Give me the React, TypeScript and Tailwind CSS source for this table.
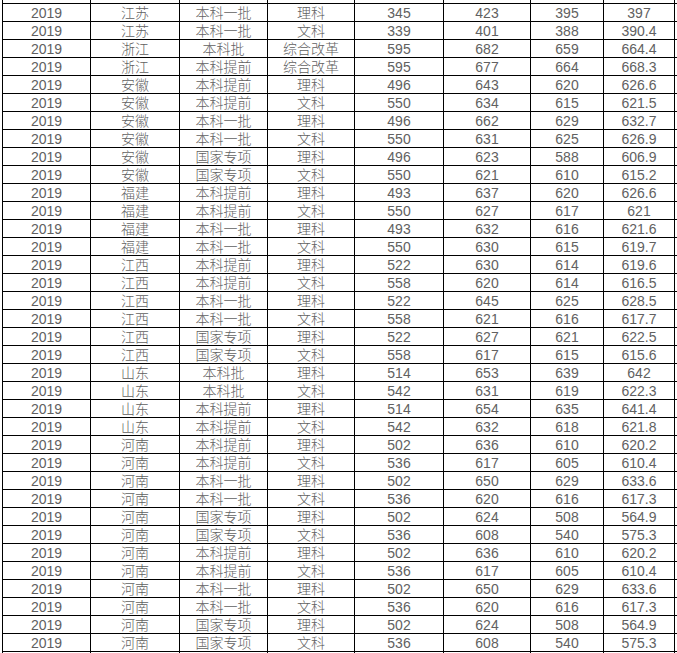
import React from 'react';

type Row = [string, string, string, string, string, string, string, string];

const rows: Row[] = [
    ['2019', '江苏', '本科一批', '理科', '345', '423', '395', '397'],
    ['2019', '江苏', '本科一批', '文科', '339', '401', '388', '390.4'],
    ['2019', '浙江', '本科批', '综合改革', '595', '682', '659', '664.4'],
    ['2019', '浙江', '本科提前', '综合改革', '595', '677', '664', '668.3'],
    ['2019', '安徽', '本科提前', '理科', '496', '643', '620', '626.6'],
    ['2019', '安徽', '本科提前', '文科', '550', '634', '615', '621.5'],
    ['2019', '安徽', '本科一批', '理科', '496', '662', '629', '632.7'],
    ['2019', '安徽', '本科一批', '文科', '550', '631', '625', '626.9'],
    ['2019', '安徽', '国家专项', '理科', '496', '623', '588', '606.9'],
    ['2019', '安徽', '国家专项', '文科', '550', '621', '610', '615.2'],
    ['2019', '福建', '本科提前', '理科', '493', '637', '620', '626.6'],
    ['2019', '福建', '本科提前', '文科', '550', '627', '617', '621'],
    ['2019', '福建', '本科一批', '理科', '493', '632', '616', '621.6'],
    ['2019', '福建', '本科一批', '文科', '550', '630', '615', '619.7'],
    ['2019', '江西', '本科提前', '理科', '522', '630', '614', '619.6'],
    ['2019', '江西', '本科提前', '文科', '558', '620', '614', '616.5'],
    ['2019', '江西', '本科一批', '理科', '522', '645', '625', '628.5'],
    ['2019', '江西', '本科一批', '文科', '558', '621', '616', '617.7'],
    ['2019', '江西', '国家专项', '理科', '522', '627', '621', '622.5'],
    ['2019', '江西', '国家专项', '文科', '558', '617', '615', '615.6'],
    ['2019', '山东', '本科批', '理科', '514', '653', '639', '642'],
    ['2019', '山东', '本科批', '文科', '542', '631', '619', '622.3'],
    ['2019', '山东', '本科提前', '理科', '514', '654', '635', '641.4'],
    ['2019', '山东', '本科提前', '文科', '542', '632', '618', '621.8'],
    ['2019', '河南', '本科提前', '理科', '502', '636', '610', '620.2'],
    ['2019', '河南', '本科提前', '文科', '536', '617', '605', '610.4'],
    ['2019', '河南', '本科一批', '理科', '502', '650', '629', '633.6'],
    ['2019', '河南', '本科一批', '文科', '536', '620', '616', '617.3'],
    ['2019', '河南', '国家专项', '理科', '502', '624', '508', '564.9'],
    ['2019', '河南', '国家专项', '文科', '536', '608', '540', '575.3'],
    ['2019', '河南', '本科提前', '理科', '502', '636', '610', '620.2'],
    ['2019', '河南', '本科提前', '文科', '536', '617', '605', '610.4'],
    ['2019', '河南', '本科一批', '理科', '502', '650', '629', '633.6'],
    ['2019', '河南', '本科一批', '文科', '536', '620', '616', '617.3'],
    ['2019', '河南', '国家专项', '理科', '502', '624', '508', '564.9'],
    ['2019', '河南', '国家专项', '文科', '536', '608', '540', '575.3'],
];

const cols = 'grid grid-cols-[88px_89px_88px_87px_89px_87px_73px_71px] border-l border-black';

const Spacer: React.FC<{ className: string }> = ({ className }) => (
    <div className={`${cols} ${className}`}>
        {Array.from({ length: 8 }).map((_, i) => (
            <div key={i} className="border-r border-black" />
        ))}
    </div>
);

const App: React.FC = () => {
    return (
        <div
            className="w-[677px] h-[653px] overflow-hidden bg-white pl-[2px]"
            style={{ fontFamily: '"Liberation Sans", "Noto Sans CJK SC", sans-serif' }}
        >
            <Spacer className="h-[3px]" />
            {rows.map((row, r) => (
                <div key={r} className={`${cols} h-[18px] border-t border-black`}>
                    {row.map((cell, c) => (
                        <div
                            key={c}
                            className="border-r border-black flex items-center justify-center text-[14px] leading-none text-[#616161] font-light"
                        >
                            {cell}
                        </div>
                    ))}
                </div>
            ))}
            <Spacer className="h-[3px] border-t" />
        </div>
    );
};

export default App;
